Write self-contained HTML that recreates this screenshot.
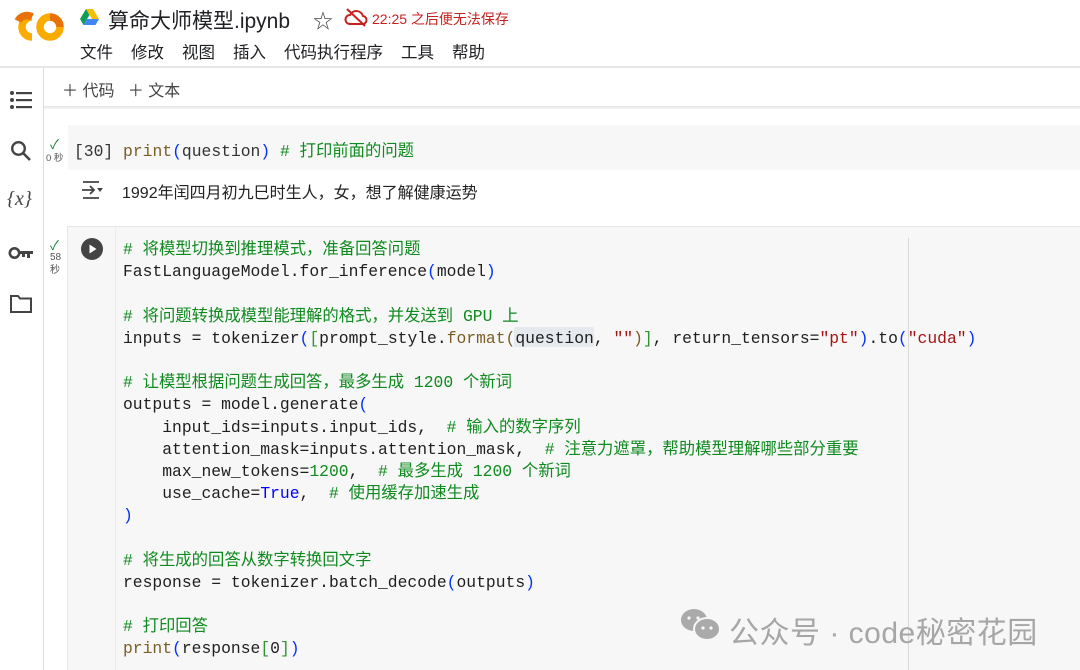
<!DOCTYPE html>
<html><head><meta charset="utf-8"><style>
*{margin:0;padding:0;box-sizing:border-box}
body{width:1080px;height:670px;overflow:hidden;background:#fff;font-family:"Liberation Sans","Noto Sans CJK SC",sans-serif;position:relative;color:#1f1f1f}
.abs{position:absolute}
.mono{font-family:"Liberation Mono","Noto Sans CJK SC",monospace;font-size:16.35px}
.pre{white-space:pre}
.c{color:#0f8a1f}.b{color:#0431fa}.f{color:#795e26}.s{color:#a31515}.k{color:#0000ff}.g{color:#319331}
.code div{height:22.2px;line-height:22.2px;white-space:pre}
</style></head><body>
<!-- logo -->
<svg class="abs" style="left:11px;top:11px" width="54" height="32" viewBox="0 0 54 32">
<path d="M21 6 A10 10 0 1 0 21 26" fill="none" stroke="#f9ab00" stroke-width="7.5"/>
<path d="M21 6 A10 10 0 0 0 7 10" fill="none" stroke="#e8710a" stroke-width="7.5"/>
<circle cx="39" cy="16" r="10" fill="none" stroke="#f9ab00" stroke-width="7.5"/>
<path d="M39 6 A10 10 0 0 1 49 16" fill="none" stroke="#e8710a" stroke-width="7.5"/>
</svg>
<!-- drive icon -->
<svg class="abs" style="left:80px;top:9px" width="19" height="16" viewBox="0 0 19 16">
<path d="M6 0h7l6 10h-7z" fill="#fbbc04"/><path d="M6 0l-6 10 3.5 6 6-10z" fill="#0f9d58"/><path d="M3.5 16h12l3.5-6h-12z" fill="#4285f4"/>
</svg>
<div class="abs" style="left:108px;top:5px;font-size:21px;color:#202124">算命大师模型.ipynb</div>
<div class="abs" style="left:313px;top:5px;font-size:20px;color:#444">☆</div>
<svg class="abs" style="left:344px;top:8px" width="24" height="19" viewBox="0 0 24 19"><path d="M6 16h12a4 4 0 0 0 1-8 7 7 0 0 0-13-1 4.5 4.5 0 0 0 0 9z" fill="none" stroke="#c5221f" stroke-width="2"/><path d="M3 1l18 17" stroke="#c5221f" stroke-width="2"/></svg>
<div class="abs" style="left:372px;top:9px;font-size:14px;color:#c5221f">22:25 之后便无法保存</div>
<div class="abs" style="left:80px;top:39px;font-size:16.5px;color:#202124;white-space:nowrap">
<span style="margin-right:18px">文件</span><span style="margin-right:18px">修改</span><span style="margin-right:18px">视图</span><span style="margin-right:18px">插入</span><span style="margin-right:18px">代码执行程序</span><span style="margin-right:18px">工具</span><span>帮助</span></div>
<div class="abs" style="left:0;top:66px;width:1080px;height:2px;background:#e6e6e6"></div>
<!-- sidebar -->
<div class="abs" style="left:43px;top:68px;width:1px;height:602px;background:#ddd"></div>
<svg class="abs" style="left:9px;top:90px" width="24" height="20" viewBox="0 0 24 20"><g fill="#444"><circle cx="3" cy="3" r="2"/><circle cx="3" cy="10" r="2"/><circle cx="3" cy="17" r="2"/><rect x="7" y="2" width="16" height="2.2"/><rect x="7" y="9" width="16" height="2.2"/><rect x="7" y="16" width="16" height="2.2"/></g></svg>
<svg class="abs" style="left:10px;top:140px" width="22" height="22" viewBox="0 0 22 22"><circle cx="8.5" cy="8.5" r="6.3" fill="none" stroke="#444" stroke-width="2.4"/><path d="M13 13l7 7" stroke="#444" stroke-width="2.6"/></svg>
<div class="abs" style="left:7px;top:188px;font-size:20px;color:#444;font-family:'Liberation Serif',serif;font-style:italic">{<i>x</i>}</div>
<svg class="abs" style="left:8px;top:245px" width="26" height="16" viewBox="0 0 26 16"><circle cx="6.5" cy="8" r="4.7" fill="none" stroke="#444" stroke-width="2.6"/><path d="M11 6h14v3h-3v4h-3v-4h-2v3h-3v-3h-3z" fill="#444"/></svg>
<svg class="abs" style="left:9px;top:294px" width="24" height="20" viewBox="0 0 24 20"><path d="M2 2h7l2 2.5h11v13.5h-20z" fill="none" stroke="#444" stroke-width="2"/></svg>
<!-- toolbar -->
<div class="abs" style="left:62px;top:77px;font-size:16px;color:#444">＋ 代码&nbsp;&nbsp;&nbsp;＋ 文本</div>
<div class="abs" style="left:44px;top:106px;width:1036px;height:3px;background:linear-gradient(#e4e4e4,#f6f6f6)"></div>
<!-- cell 1 -->
<div class="abs" style="left:68px;top:125px;width:1012px;height:45px;background:#f7f7f7"></div>
<div class="abs" style="left:50px;top:134px;color:#188038;font-size:13px">✓</div>
<div class="abs" style="left:46px;top:150px;font-size:9.5px;color:#555">0 秒</div>
<div class="abs mono pre" style="left:74px;top:137px;color:#333">[30] <span class="f">print</span><span class="b">(</span>question<span class="b">)</span> <span class="c"># 打印前面的问题</span></div>
<svg class="abs" style="left:80px;top:180px" width="24" height="20" viewBox="0 0 24 20"><path d="M3 2h16M3 18h16M2 10h12M10 6l4 4-4 4" fill="none" stroke="#444" stroke-width="1.8"/><path d="M17 8h6l-3 4z" fill="#444"/></svg>
<div class="abs" style="left:122px;top:179px;font-size:16px;color:#222">1992年闰四月初九巳时生人，女，想了解健康运势</div>
<!-- cell 2 -->
<div class="abs" style="left:67px;top:226px;width:1013px;height:444px;background:#f7f7f7;border:1px solid #e6e6e6;border-right:none;border-bottom:none"></div>
<div class="abs" style="left:115px;top:227px;width:1px;height:443px;background:#ececec"></div>
<div class="abs" style="left:908px;top:238px;width:1px;height:432px;background:#d8d8d8"></div>
<div class="abs" style="left:50px;top:235px;color:#188038;font-size:13px">✓</div>
<div class="abs" style="left:50px;top:251px;font-size:10px;color:#555;line-height:13px">58<br>秒</div>
<svg class="abs" style="left:81px;top:238px" width="22" height="22" viewBox="0 0 22 22"><circle cx="11" cy="11" r="11" fill="#444"/><path d="M8.5 6.5v9l7-4.5z" fill="#fff"/></svg>
<div class="abs" style="left:514px;top:327px;width:80px;height:20px;background:#e6e9ee;border-radius:2px"></div>
<div class="abs mono code" style="left:123px;top:239px;color:#1f1f1f"><div class="c"># 将模型切换到推理模式，准备回答问题</div><div>FastLanguageModel.for_inference<span class="b">(</span>model<span class="b">)</span></div><div> </div><div class="c"># 将问题转换成模型能理解的格式，并发送到 GPU 上</div><div>inputs = tokenizer<span class="b">(</span><span class="g">[</span>prompt_style.<span class="f">format</span><span class="f">(</span>question, <span class="s">""</span><span class="f">)</span><span class="g">]</span>, return_tensors=<span class="s">"pt"</span><span class="b">)</span>.to<span class="b">(</span><span class="s">"cuda"</span><span class="b">)</span></div><div> </div><div class="c"># 让模型根据问题生成回答，最多生成 1200 个新词</div><div>outputs = model.generate<span class="b">(</span></div><div>    input_ids=inputs.input_ids,  <span class="c"># 输入的数字序列</span></div><div>    attention_mask=inputs.attention_mask,  <span class="c"># 注意力遮罩，帮助模型理解哪些部分重要</span></div><div>    max_new_tokens=<span class="c">1200</span>,  <span class="c"># 最多生成 1200 个新词</span></div><div>    use_cache=<span class="k">True</span>,  <span class="c"># 使用缓存加速生成</span></div><div><span class="b">)</span></div><div> </div><div class="c"># 将生成的回答从数字转换回文字</div><div>response = tokenizer.batch_decode<span class="b">(</span>outputs<span class="b">)</span></div><div> </div><div class="c"># 打印回答</div><div><span class="f">print</span><span class="b">(</span>response<span class="g">[</span>0<span class="g">]</span><span class="b">)</span></div></div>
<!-- watermark -->
<svg class="abs" style="left:680px;top:608px" width="42" height="34" viewBox="0 0 42 34"><ellipse cx="14" cy="12" rx="13" ry="11" fill="#aaa"/><ellipse cx="27" cy="21" rx="13" ry="11" fill="#aaa" stroke="#f7f7f7" stroke-width="2"/><circle cx="9" cy="10" r="1.6" fill="#f7f7f7"/><circle cx="18" cy="10" r="1.6" fill="#f7f7f7"/><circle cx="23" cy="20" r="1.6" fill="#f7f7f7"/><circle cx="31" cy="20" r="1.6" fill="#f7f7f7"/></svg>
<div class="abs" style="left:729px;top:608px;font-size:30px;color:#a6a6a6;white-space:nowrap;letter-spacing:0.5px">公众号 · code秘密花园</div>
</body></html>
